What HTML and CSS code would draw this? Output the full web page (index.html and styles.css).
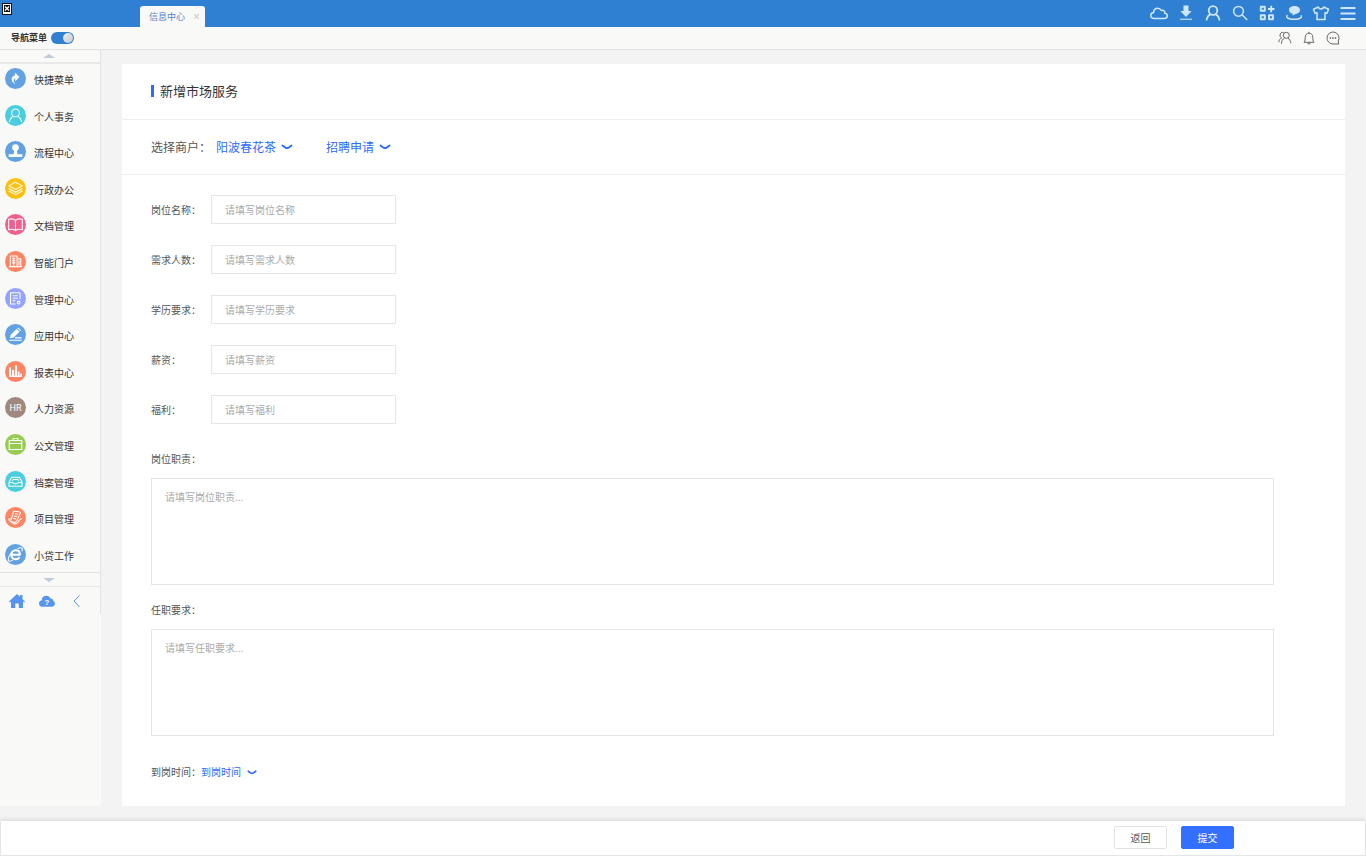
FILE: index.html
```html
<!DOCTYPE html>
<html lang="zh-CN">
<head>
<meta charset="utf-8">
<title>信息中心</title>
<link rel="stylesheet" href="styles.css">
</head>
<body>
<header class="topbar">
  <div class="topbar-left">
    <svg class="broken" viewBox="0 0 10 12" aria-hidden="true"><path fill="#111" d="M0 0h10v12H0z"/><path fill="#fff" d="M1 1h8v10H1z"/><path fill="#111" d="M2 2h6v7H2z"/><path d="M3 3.500l4 4m0-4l-4 4" stroke="#fff" stroke-width="1.300"/></svg>
  </div>
  <div class="tab"><a href="#">信息中心</a><button type="button" class="tab-close" aria-label="关闭"><svg viewBox="0 0 6 6"><path d="M1 1l4 4m0-4L1 5"/></svg></button></div>
  <nav class="tools" aria-label="工具">
    <a href="#" aria-label="云盘"><svg viewBox="0 0 18 18"><path d="M4.300 14.600C2 14.600.8 13.200.8 11.600c0-1.700 1.200-2.900 2.800-3C3.700 6 5.400 4.200 7.700 4.200c1.700 0 2.900.8 3.600 2.300 2.300-.6 3.700.6 3.500 2.800 1.700.2 2.500 1.200 2.500 2.500 0 1.600-1.200 2.800-2.900 2.800z"/></svg></a>
    <a href="#" aria-label="下载"><svg viewBox="0 0 18 18"><path class="solid" d="M6.500 1.500h5v5.500h3.200L9 13 3.300 7h3.200z"/><path d="M3 15.300h12" opacity=".75"/></svg></a>
    <a href="#" aria-label="用户"><svg viewBox="0 0 18 18"><circle cx="9" cy="6.500" r="4.300" stroke-width="1.800"/><path d="M2.500 16.500c.4-3.300 1.800-5.300 4-6.200m5 0c2.200.9 3.600 2.900 4 6.200" stroke-width="1.800"/></svg></a>
    <a href="#" aria-label="搜索"><svg viewBox="0 0 18 18"><circle cx="7.500" cy="7.300" r="4.900"/><path d="M11.200 11l5 5"/></svg></a>
    <a href="#" aria-label="应用"><svg viewBox="0 0 18 18"><path stroke-width="1.900" d="M2.800 2.800h4v4h-4zM2.800 11.300h4v4h-4zM11 11.300h4v4h-4zM10 5h6.500M13.200 1.700v6.600"/></svg></a>
    <a href="#" aria-label="消息"><svg viewBox="0 0 18 18"><path class="solid" d="M9.500 2c3.300 0 5.500 1.600 5.500 4 0 2.100-1.500 3.400-3.600 3.800L7.300 11.500l.5-1.800C5.400 9.300 4 8 4 6c0-2.400 2.200-4 5.500-4z"/><path d="M2.500 11.200c-.8.500-1 1.300-.6 2 2 2.800 12.400 2.900 14.400 0 .4-.7.100-1.400-.6-1.800"/></svg></a>
    <a href="#" aria-label="皮肤"><svg viewBox="0 0 18 18"><path d="M6.300 3L1.500 5.200 3 9.300l2-.6v6.800h8V8.700l2 .6 1.500-4.100L11.700 3C11 5.600 7 5.600 6.300 3z"/></svg></a>
    <a href="#" aria-label="菜单"><svg viewBox="0 0 18 18"><path d="M1.500 4h15M1.500 9.500h15M1.500 15h15" stroke-width="1.800"/></svg></a>
  </nav>
</header>
<div class="subbar">
  <label class="switch"><span>导航菜单</span><input type="checkbox" checked></label>
  <nav class="subtools" aria-label="通知">
    <a href="#" aria-label="联系人"><svg viewBox="0 0 14 14"><circle cx="8.300" cy="4.300" r="3"/><path d="M3.400 12.800c.1-2.800 1.200-4.600 3-5.600m3.600 0c1.700 1 2.600 2.700 2.900 5M5.600 1.500C3.700.9 2 2.200 2 4.200c0 1.300.6 2.300 1.500 2.800C2 7.700 1.100 9.100.8 11.200"/></svg></a>
    <a href="#" aria-label="提醒"><svg viewBox="0 0 14 14"><path d="M2 11.300h10c-1.300-1.400-1.100-3-1.200-5C10.700 3.700 9.400 2.200 7 2.200S3.300 3.700 3.200 6.300c-.1 2 .1 3.600-1.200 5zM7 .8v1.400M5.500 12.700h3"/></svg></a>
    <a href="#" aria-label="会话"><svg viewBox="0 0 14 14"><path d="M12.700 13H7a6 6 0 1 1 5.200-3z"/><path d="M3.700 7h1.500M6.200 7h1.500M8.700 7h1.500" stroke-width="1.500"/></svg></a>
  </nav>
</div>
<div class="body">
  <aside class="sidebar">
    <div class="side-inner">
      <button type="button" class="scroll" aria-label="向上"><svg viewBox="0 0 12 4"><path d="M0 4l6-4 6 4z"/></svg></button>
      <ul class="menu">
        <li><a href="#"><span class="ico blue"><svg viewBox="0 0 20 20"><path class="w" d="M9.500 4.300l4.300 4.200-4 4-.1-2.500c-1.900.6-1.900 2.700.3 5.400C5.700 13.500 4.700 8 9.500 6.800z"/></svg></span><span>快捷菜单</span></a></li>
        <li><a href="#"><span class="ico cyan"><svg viewBox="0 0 20 20"><circle cx="10" cy="7.500" r="3.700"/><path d="M4.300 16.200c.3-2.800 1.500-4.500 3.500-5.300m4.400 0c2 .8 3.200 2.500 3.500 5.300"/></svg></span><span>个人事务</span></a></li>
        <li><a href="#"><span class="ico blue"><svg viewBox="0 0 20 20"><circle class="w" cx="10" cy="6.300" r="3.200"/><path class="w" d="M8.800 8h2.400l.6 4.500h4.700v2.800h-13v-2.800h4.700z"/></svg></span><span>流程中心</span></a></li>
        <li><a href="#"><span class="ico yellow"><svg viewBox="0 0 20 20"><path d="M10 4l6.500 3.500L10 11 3.500 7.500zM3.500 10l6.500 3.500 6.500-3.500M3.500 12.300l6.500 3.500 6.500-3.500"/></svg></span><span>行政办公</span></a></li>
        <li><a href="#"><span class="ico pink"><svg viewBox="0 0 20 20"><path d="M10 6C8.300 4.500 5.500 4.500 3.500 5v10c2-.6 4.800-.5 6.500.8 1.700-1.300 4.500-1.400 6.500-.8V5c-2-.5-4.800-.5-6.500 1zv9.800"/></svg></span><span>文档管理</span></a></li>
        <li><a href="#"><span class="ico coral"><svg viewBox="0 0 20 20"><path d="M5 14.800V4.700h6.500v10.100M11.500 7.500H15v7.300M3.700 14.900h12.600M6.700 7.300h3.200M6.700 9.300h3.200M6.700 11.300h3.200M8.300 6v8.500M13.300 9v4.500"/></svg></span><span>智能门户</span></a></li>
        <li><a href="#"><span class="ico violet"><svg viewBox="0 0 20 20"><path d="M10 15.300H5.300V4.500h9v6.300M7.300 7.400h5M7.300 9.700h5M7.300 12h2.500"/><circle cx="13" cy="13.800" r="1.300"/></svg></span><span>管理中心</span></a></li>
        <li><a href="#"><span class="ico blue"><svg viewBox="0 0 20 20"><path class="w" d="M5.500 10.200l5.500-5.500 2.800 2.600-5.600 5.600-3.500.6zM11.700 4l.8-.7 2.800 2.600-.8.800z"/><path d="M9.500 13.200h6.300M4 15.500h12"/></svg></span><span>应用中心</span></a></li>
        <li><a href="#"><span class="ico coral"><svg viewBox="0 0 20 20"><path class="w" d="M3.800 6h2v8h-2zM6.700 8.500h2V14h-2zM9.500 4.300h2V14h-2zM12.300 10h1.500v4h-1.500zM14.500 12H16v2h-1.500zM3.800 13.800H16v1.500H3.800z"/></svg></span><span>报表中心</span></a></li>
        <li><a href="#"><span class="ico brown">HR</span><span>人力资源</span></a></li>
        <li><a href="#"><span class="ico green"><svg viewBox="0 0 20 20"><path d="M4 6.200h12v8.600H4zM7.700 6V4.300h4.600V6M4 9h12"/></svg></span><span>公文管理</span></a></li>
        <li><a href="#"><span class="ico cyan"><svg viewBox="0 0 20 20"><path d="M3.800 10.500L6.300 6h7.400l2.500 4.500v4H3.800zM3.800 11h3.700c.2 1.700 4.800 1.700 5 0h3.700M7 9.300l.7-1.300h4.600l.7 1.300"/></svg></span><span>档案管理</span></a></li>
        <li><a href="#"><span class="ico coral"><svg viewBox="0 0 20 20"><path d="M8.300 4l5 .5c1 0 1.700.8 1.200 1.800l-3.200 6.500c-.8 1.500-2 2.300-3.300 1.700l-3.800-1.700c-1-.5-.5-1.500.3-1.500l1.500.3zM4.500 13.500l4.300 2.800c3 .2 4-2 5-4l2.500-1.500M9.500 6.500l3 .5M8.500 8.700l3 .5M7.500 10.800l3 .5"/></svg></span><span>项目管理</span></a></li>
        <li><a href="#"><span class="ico blue"><svg viewBox="0 0 20 20"><path d="M6.500 10.200h7.700c0-2.700-1.600-4.200-3.900-4.200S6 7.700 6 10.300c0 2.500 1.800 4.200 4.300 4.200 1.600 0 2.800-.6 3.500-1.900" stroke-width="2"/><path d="M12 4.500c2.500-1.400 4.500-1.300 4.500.5 0 .6-.2 1.300-.5 2M5.500 9C3.300 12.200 2.600 15 3.700 16c.8.700 2.200.3 3.900-.9"/></svg></span><span>小贷工作</span></a></li>
      </ul>
      <button type="button" class="scroll down" aria-label="向下"><svg viewBox="0 0 12 4"><path d="M0 0l6 4 6-4z"/></svg></button>
      <div class="side-foot">
        <a href="#" aria-label="首页"><svg viewBox="0 0 16 16"><path d="M8 1l3 2.800V2h2.500v4.200L16 8.600l-.8.900-1.200-1V15H9.800v-4.500H6.300V15H2V8.500l-1.200 1L0 8.600z"/></svg></a>
        <a href="#" aria-label="帮助"><svg viewBox="0 0 16 16"><path d="M4 13.800C1.500 13.800 0 12.300 0 10.400 0 8.700 1.200 7.500 2.800 7.200 2.900 4.600 4.600 2.800 7.200 2.800c2.100 0 3.500 1 4.200 2.700 2 .1 3 1.200 3 2.800 1 .4 1.600 1.200 1.600 2.300 0 1.900-1.400 3.200-3.500 3.200z"/><text x="8" y="11.500" text-anchor="middle">?</text></svg></a>
        <a href="#" aria-label="收起"><svg viewBox="0 0 16 16"><path class="line" d="M10.500 2.500L5 8l5.500 6"/></svg></a>
      </div>
    </div>
  </aside>
  <main class="card">
    <div class="card-head"><h1>新增市场服务</h1></div>
    <div class="merchant">
      <label for="shop">选择商户：</label>
      <span class="pick"><select id="shop"><option>阳波春花茶</option></select><svg viewBox="0 0 12 8"><path d="M1.500 2.500L4.500 4.700Q6 5.500 7.500 4.700L10.500 2.500"/></svg></span>
      <span class="pick second"><select aria-label="申请类型"><option>招聘申请</option></select><svg viewBox="0 0 12 8"><path d="M1.500 2.500L4.500 4.700Q6 5.500 7.500 4.700L10.500 2.500"/></svg></span>
    </div>
    <form class="form" id="job">
      <div class="fields">
        <div class="field"><label for="f1">岗位名称：</label><input id="f1" type="text" placeholder="请填写岗位名称"></div>
        <div class="field"><label for="f2">需求人数：</label><input id="f2" type="text" placeholder="请填写需求人数"></div>
        <div class="field"><label for="f3">学历要求：</label><input id="f3" type="text" placeholder="请填写学历要求"></div>
        <div class="field"><label for="f4">薪资：</label><input id="f4" type="text" placeholder="请填写薪资"></div>
        <div class="field"><label for="f5">福利：</label><input id="f5" type="text" placeholder="请填写福利"></div>
      </div>
      <div class="area first"><label for="a1">岗位职责：</label><textarea id="a1" placeholder="请填写岗位职责..."></textarea></div>
      <div class="area"><label for="a2">任职要求：</label><textarea id="a2" placeholder="请填写任职要求..."></textarea></div>
      <div class="arrive"><label for="when">到岗时间：</label><span class="pick small"><select id="when"><option>到岗时间</option></select><svg viewBox="0 0 12 8"><path d="M1.500 2.500L4.500 4.700Q6 5.500 7.500 4.700L10.500 2.500"/></svg></span></div>
    </form>
  </main>
</div>
<footer class="actions">
  <button type="button">返回</button>
  <button type="submit" form="job" class="primary">提交</button>
</footer>
</body>
</html>
```
FILE: styles.css
```css
* { box-sizing: border-box; }
body {
  margin: 0;
  min-height: 100vh;
  display: flex;
  flex-direction: column;
  background: #f3f3f3;
  color: #333;
  font: 10px/16px "Noto Sans CJK SC", sans-serif;
}
a { color: inherit; text-decoration: none; }
button, input, select, textarea { font: inherit; color: inherit; margin: 0; }
button { cursor: pointer; }
svg { display: block; fill: none; }

.topbar { display: flex; height: 27px; background: #2f80d2; }
.topbar-left { width: 140px; padding: 3px 2px; }
.broken { width: 10px; height: 12px; }
.tab {
  display: flex;
  align-items: center;
  gap: 8px;
  margin-top: 6px;
  padding: 0 5px 0 9px;
  border-radius: 3px 3px 0 0;
  background: #f9f9f7;
  color: #4a87cc;
  font-size: 9px;
}
.tab-close { padding: 0; border: 0; background: none; }
.tab-close svg { width: 7px; height: 7px; stroke: #ccc; stroke-width: 1; }
.tools { display: flex; align-items: center; gap: 9px; margin-left: auto; padding: 0 9px 2px 0; }
.tools svg { width: 18px; height: 18px; stroke: #cfe6fb; stroke-width: 1.5; stroke-linejoin: round; }
.tools .solid { fill: #cfe6fb; stroke: none; }

.subbar {
  display: flex;
  justify-content: space-between;
  align-items: center;
  height: 23px;
  padding: 0 26px 0 11px;
  background: #f9f9f7;
  border-bottom: 1px solid #e2e2e2;
}
.switch { display: flex; align-items: center; gap: 4px; font-size: 9px; font-weight: 700; }
.switch input {
  appearance: none;
  display: flex;
  justify-content: flex-end;
  width: 23px;
  height: 12px;
  padding: 1px;
  border-radius: 6px;
  background: #2f80d2;
}
.switch input::before {
  content: "";
  width: 10px;
  height: 10px;
  border-radius: 50%;
  background: linear-gradient(135deg, #eee, #c8c8d0);
}
.switch input:not(:checked) { justify-content: flex-start; background: #bbb; }
.subtools { display: flex; gap: 10px; }
.subtools svg { width: 14px; height: 14px; stroke: #666; stroke-width: 1; stroke-linejoin: round; }

.body { flex: 1; display: flex; padding-right: 21px; }
.sidebar { flex: none; width: 101px; margin-right: 21px; background: #f9f9f7; }
.side-inner { border-right: 1px solid #e2e2e2; }
.scroll {
  display: flex;
  width: 100%;
  height: 14px;
  padding: 4px 0 0 43px;
  border: 0;
  border-bottom: 2px solid #e8e8e8;
  background: none;
}
.scroll svg { width: 12px; height: 4px; fill: #bfcbdb; }
.scroll.down { height: 15px; padding-top: 5px; border-top: 1px solid #e2e2e2; border-bottom-width: 1px; }
.menu {
  display: flex;
  flex-direction: column;
  justify-content: space-between;
  height: 508px;
  margin: 0;
  padding: 4px 0 8px 5px;
  list-style: none;
}
.menu a { display: flex; gap: 8px; height: 20px; line-height: 24px; }
.ico {
  display: grid;
  place-items: center;
  flex: none;
  width: 21px;
  height: 21px;
  border-radius: 50%;
  color: #fff;
  font: 9px/20px "Roboto", sans-serif;
}
.ico svg { width: 21px; height: 21px; stroke: #fff; stroke-width: 1; stroke-linejoin: round; }
.ico .w { fill: #fff; stroke: none; }
.blue { background: #62a1e2; }
.cyan { background: #4bcde0; }
.yellow { background: #fec00f; }
.pink { background: #f0608f; }
.coral { background: #ff8463; }
.violet { background: #93a3ff; }
.brown { background: #a1887f; }
.green { background: #96cc50; }
.side-foot { display: flex; gap: 14px; padding: 6px 0 5px 9px; }
.side-foot svg { width: 16px; height: 16px; fill: #5694ee; }
.side-foot .line { fill: none; stroke: #5694ee; }
.side-foot text { fill: #fff; font: 700 8px "Liberation Sans", sans-serif; }

.card { flex: 1; min-width: 0; margin-top: 14px; background: #fff; }
.card-head { display: flex; align-items: center; height: 56px; padding: 0 0 2px 29px; border-bottom: 1px solid #eee; }
.card-head h1 {
  display: flex;
  align-items: center;
  gap: 6px;
  margin: 0;
  font-size: 13px;
  font-weight: 400;
}
.card-head h1::before { content: ""; width: 3px; height: 12px; background: #2f6bff; }
.merchant {
  display: flex;
  align-items: center;
  height: 55px;
  padding-left: 29px;
  border-bottom: 1px solid #eee;
  color: #555;
  font-size: 12px;
}
.merchant label { width: 65px; white-space: nowrap; }
.pick { display: flex; align-items: center; color: #2f6bff; }
.pick.second { margin-left: 33px; }
.pick select {
  appearance: none;
  margin-right: -14px;
  padding: 0 18px 0 0;
  border: 0;
  background: none;
}
.pick svg { width: 12px; height: 8px; pointer-events: none; stroke: #2f6bff; stroke-width: 2; stroke-linecap: round; }
.pick.small svg { width: 10px; height: 7px; }
.pick.small select { margin-right: -12px; }

.form { padding: 20px 71px 25px 29px; color: #555; }
.fields { display: grid; gap: 21px; }
.field { display: flex; align-items: center; }
.field label { width: 60px; }
.field input {
  width: 185px;
  height: 29px;
  padding: 0 13px;
  border: 1px solid #e6e6e6;
  background: #fff;
}
::placeholder { color: #aaa; opacity: 1; }
.area { display: grid; gap: 11px; margin-top: 17px; }
.area.first { margin-top: 27px; }
.area textarea {
  display: block;
  width: 100%;
  height: 107px;
  padding: 10px 13px;
  border: 1px solid #e6e6e6;
  resize: none;
}
.arrive { display: flex; margin-top: 28px; }

.actions {
  display: flex;
  justify-content: flex-end;
  gap: 14px;
  margin-top: 15px;
  padding: 5px 131px 6px;
  background: #fff;
  border: 1px solid #e5e5e5;
  border-top: 0;
  box-shadow: 0 -2px 4px #ddd;
}
.actions button {
  width: 53px;
  height: 23px;
  padding: 0;
  border: 1px solid #e2e2e2;
  border-radius: 2px;
  background: #fff;
  color: #555;
}
.actions .primary { background: #3370ff; border-color: #3370ff; color: #fff; }
```
